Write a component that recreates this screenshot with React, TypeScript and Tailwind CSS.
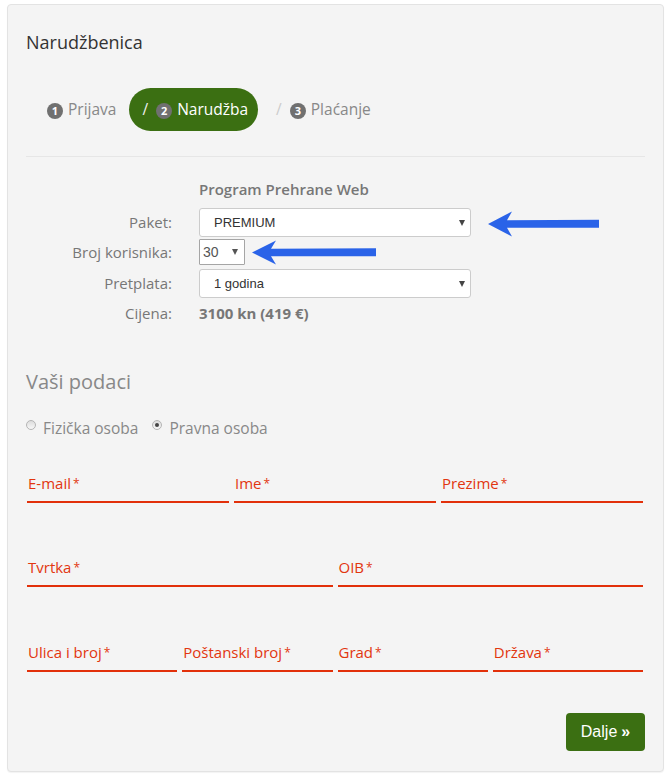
import React from "react";

const Badge = ({ n }: { n: number }) => (
  <span className="inline-flex items-center justify-center w-[16px] h-[16px] rounded-full bg-[#707070] text-white text-[11px] font-bold leading-none mt-[2px]">
    {n}
  </span>
);

const Caret = () => (
  <span className="absolute right-[5px] top-1/2 -translate-y-1/2 w-0 h-0 border-x-[3.5px] border-x-transparent border-t-[6px] border-t-[#444]" />
);

const Select = ({ text, w }: { text: string; w: string }) => (
  <div
    className={`relative flex items-center h-[29px] ${w} bg-white border border-[#cccccc] rounded-[3px] pl-[14px] font-['Liberation_Sans',Arial,sans-serif] text-[13px] text-[#333]`}
  >
    {text}
    <Caret />
  </div>
);

const BlueArrow = ({ w, h }: { w: number; h: number }) => {
  const m = h / 2;
  const hl = 22;
  const st = 3.8;
  return (
    <svg width={w} height={h} viewBox={`0 0 ${w} ${h}`}>
      <path
        d={`M0 ${m} L${hl + 2} 0.5 L${hl - 3} ${m - st} L${w} ${m - st - 0.5} L${w} ${m + st} L${hl - 3} ${m + st} L${hl + 2} ${h - 0.5} Z`}
        fill="#2a63e8"
      />
    </svg>
  );
};

const Field = ({ label }: { label: string }) => (
  <div className="flex flex-col">
    <div className="h-[20px] leading-[20px] pl-[1px] text-[15px] font-medium text-[#e2360f] whitespace-nowrap">
      {label}
      <sup className="text-[12px] ml-[2px] relative -top-[1px]">*</sup>
    </div>
    <div className="mt-[8px] h-[2px] bg-[#e2300a]" />
  </div>
);

const Radio = ({ checked }: { checked?: boolean }) => (
  <span className="relative inline-flex items-center justify-center w-[10px] h-[10px] rounded-full border border-[#b5b5b5] bg-gradient-to-b from-[#dcdcdc] to-[#f8f8f8] -mt-[8px]">
    {checked && <span className="w-[4px] h-[4px] rounded-full bg-[#444]" />}
  </span>
);

export default function App() {
  return (
    <div className="relative bg-white min-h-[777px] font-['Open_Sans',sans-serif]">
      <div className="absolute left-[7px] top-[4px] w-[657px] h-[768px] bg-[#f4f4f4] border border-[#e3e3e3] rounded-[4px] shadow-[0_1px_1px_rgba(0,0,0,0.05)] px-[18px] pt-[26px]">
        <div className="text-[18px] leading-[22px] text-[#333]">Narudžbenica</div>

        {/* Steps */}
        <div className="mt-[35px] flex items-center ml-[21px] text-[15.5px]">
          <div className="flex items-center text-[#888]">
            <Badge n={1} />
            <span className="ml-[5px]">Prijava</span>
          </div>
          <div className="ml-[13px] h-[43px] rounded-full bg-[#3b6f12] flex items-center pl-[13px] pr-[10px] text-white">
            <span className="text-[#eee]">/</span>
            <span className="ml-[8px] flex items-center">
              <Badge n={2} />
            </span>
            <span className="ml-[5px]">Narudžba</span>
          </div>
          <div className="ml-[18px] flex items-center text-[#888]">
            <span className="text-[#ccc]">/</span>
            <span className="ml-[8px] flex items-center">
              <Badge n={3} />
            </span>
            <span className="ml-[5px]">Plaćanje</span>
          </div>
        </div>

        <div className="mt-[25px] h-px bg-[#e6e6e6]" />

        {/* Order form */}
        <div className="text-[15px] text-[#777]">
          <div className="mt-[22px] flex items-center h-[20px]">
            <div className="w-[146px]" />
            <div className="ml-[27px] font-semibold text-[#777]">Program Prehrane Web</div>
          </div>
          <div className="mt-[9px] flex items-center">
            <div className="w-[146px] text-right">Paket:</div>
            <div className="ml-[27px]">
              <Select text="PREMIUM" w="w-[272px]" />
            </div>
          </div>
          <div className="mt-[2px] flex items-center">
            <div className="w-[146px] text-right">Broj korisnika:</div>
            <div className="ml-[27px]">
              <div className="relative flex items-center h-[26px] w-[46px] bg-white border border-[#a5a5a5] rounded-[1px] pl-[3px] font-['Liberation_Sans',Arial,sans-serif] text-[14px] text-[#555]">
                30
                <span className="absolute right-[6px] top-1/2 -translate-y-1/2 w-0 h-0 border-x-[3.5px] border-x-transparent border-t-[6px] border-t-[#555]" />
              </div>
            </div>
          </div>
          <div className="mt-[4px] flex items-center">
            <div className="w-[146px] text-right">Pretplata:</div>
            <div className="ml-[27px]">
              <Select text="1 godina" w="w-[272px]" />
            </div>
          </div>
          <div className="mt-[5px] flex items-center h-[20px]">
            <div className="w-[146px] text-right">Cijena:</div>
            <div className="ml-[27px] font-bold">3100 kn (419 €)</div>
          </div>
        </div>

        {/* Personal data */}
        <div className="mt-[45px] text-[20px] leading-[28px] text-[#888]">Vaši podaci</div>
        <div className="mt-[23px] flex items-center h-[20px] text-[15.5px] text-[#888]">
          <Radio />
          <span className="ml-[7px]">Fizička osoba</span>
          <span className="ml-[14px] flex items-center">
            <Radio checked />
          </span>
          <span className="ml-[7px]">Pravna osoba</span>
        </div>

        <div className="ml-[1px] w-[616px]">
          <div className="mt-[34px] grid grid-cols-3 gap-x-[5px]">
            <Field label="E-mail" />
            <Field label="Ime" />
            <Field label="Prezime" />
          </div>
          <div className="mt-[54px] grid grid-cols-2 gap-x-[5px]">
            <Field label="Tvrtka" />
            <Field label="OIB" />
          </div>
          <div className="mt-[55px] grid grid-cols-4 gap-x-[5px]">
            <Field label="Ulica i broj" />
            <Field label="Poštanski broj" />
            <Field label="Grad" />
            <Field label="Država" />
          </div>
        </div>

        <div className="mt-[41px] flex justify-end">
          <button className="h-[38px] w-[79px] rounded-[4px] bg-[#3b6f12] text-white font-['Liberation_Sans',Arial,sans-serif] text-[16px] flex items-center justify-center">
            Dalje<span className="ml-[4px] font-bold">»</span>
          </button>
        </div>
      </div>

      <div className="absolute left-[488px] top-[211px]">
        <BlueArrow w={111} h={26} />
      </div>
      <div className="absolute left-[252px] top-[240px]">
        <BlueArrow w={124} h={25} />
      </div>
    </div>
  );
}
